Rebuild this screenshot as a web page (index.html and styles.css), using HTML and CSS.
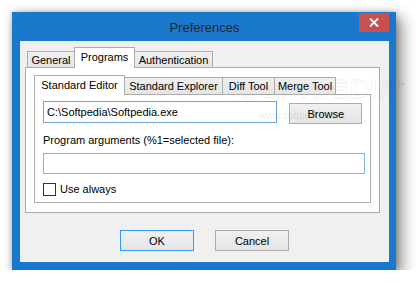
FILE: index.html
```html
<!DOCTYPE html>
<html lang="en">
<head>
    <meta charset="UTF-8">
    <title>Preferences</title>
    <link rel="stylesheet" href="styles.css">
</head>
<body>
    <div class="window">
        <div class="titlebar">
            <span class="title">Preferences</span>
            <div class="close">
                <svg width="10" height="9" viewBox="0 0 10 9">
                    <path d="M1 0.5 L9 8.5 M9 0.5 L1 8.5" stroke="#fff" stroke-width="1.8" fill="none"/>
                </svg>
            </div>
        </div>

        <div class="client">
            <div class="tabs outer-tabs">
                <div class="tab">General</div>
                <div class="tab active">Programs</div>
                <div class="tab">Authentication</div>
            </div>

            <div class="panel outer-panel">
                <div class="tabs inner-tabs">
                    <div class="tab active">Standard Editor</div>
                    <div class="tab">Standard Explorer</div>
                    <div class="tab">Diff Tool</div>
                    <div class="tab">Merge Tool</div>
                </div>

                <div class="panel inner-panel">
                    <div class="path-row">
                        <div class="field path">C:\Softpedia\Softpedia.exe</div>
                        <div class="btn browse">Browse</div>
                    </div>
                    <div class="label">Program arguments (%1=selected file):</div>
                    <div class="field args"></div>
                    <div class="check">
                        <span class="box"></span>
                        <span>Use always</span>
                    </div>
                </div>
            </div>

            <div class="actions">
                <div class="btn default">OK</div>
                <div class="btn">Cancel</div>
            </div>
        </div>

        <!-- watermark -->
        <div class="mark">SOFTPEDIA<sup>™</sup></div>
        <div class="mark-url">www.softpedia.com</div>
    </div>
</body>
</html>
```

FILE: styles.css
```css
body {
    margin: 0;
    background: #fff;
    font-family: 'Liberation Sans', Arial, sans-serif;
    font-size: 11px;
    color: #000;
}

.window {
    position: relative;
    margin: 12px 0 0 12px;
    width: 384px;
    height: 258px;
    box-sizing: border-box;
    padding: 0 7px 8px 8px;
    background: #1a79cc;
    display: flex;
    flex-direction: column;
    box-shadow: 0 0 6px rgba(0,0,0,0.25), 6px 6px 14px rgba(0,0,0,0.45);
}

.titlebar {
    position: relative;
    height: 29px;
    display: flex;
    align-items: center;
    justify-content: center;
}

.title {
    font-size: 13px;
    color: #1d2733;
    margin-top: 1px;
}

.close {
    position: absolute;
    top: 1px;
    right: 0;
    width: 30px;
    height: 19px;
    background: #c75050;
    display: flex;
    align-items: center;
    justify-content: center;
}

.close svg {
    display: block;
}

.client {
    flex: 1;
    background: #f0f0f0;
    padding: 6px 9px 0 5px;
    display: flex;
    flex-direction: column;
}

.tabs {
    display: flex;
    align-items: flex-end;
    position: relative;
    z-index: 1;
}

.tab {
    box-sizing: border-box;
    border: 1px solid #acacac;
    border-bottom: none;
    border-right: none;
    background: linear-gradient(#f0f0f0, #e5e5e5);
    display: flex;
    align-items: center;
    justify-content: center;
    white-space: nowrap;
}

.tab:last-child,
.tab.active {
    border-right: 1px solid #acacac;
}

.tab.active {
    background: #fff;
    margin-bottom: -1px;
}

.tab.active + .tab {
    border-left: none;
}

.outer-tabs {
    height: 20px;
    padding-left: 2px;
}

.outer-tabs .tab {
    height: 16px;
}

.outer-tabs .tab.active {
    height: 21px;
    padding-bottom: 2px;
}

.outer-tabs .tab:nth-child(1) { width: 47px; }
.outer-tabs .tab:nth-child(2) { width: 61px; }
.outer-tabs .tab:nth-child(3) { width: 78px; }

.inner-tabs {
    height: 19px;
}

.inner-tabs .tab {
    height: 17px;
}

.inner-tabs .tab.active {
    height: 20px;
    padding-bottom: 2px;
}

.inner-tabs .tab:nth-child(1) { width: 91px; }
.inner-tabs .tab:nth-child(2) { width: 97px; }
.inner-tabs .tab:nth-child(3) { width: 52px; }
.inner-tabs .tab:nth-child(4) { width: 62px; }

.panel {
    box-sizing: border-box;
    border: 1px solid #acacac;
    background: #fff;
}

.outer-panel {
    width: 355px;
    height: 146px;
    padding: 7px 8px 8px 8px;
    display: flex;
    flex-direction: column;
}

.inner-panel {
    width: 337px;
    height: 109px;
    padding: 6px 8px 0 8px;
}

.path-row {
    display: flex;
    align-items: flex-start;
    gap: 12px;
}

.field {
    box-sizing: border-box;
    border: 1px solid #7eb4ea;
    background: #fff;
    display: flex;
    align-items: center;
    padding-left: 3px;
}

.field.path {
    width: 236px;
    height: 22px;
    border-color: #6ea2dc;
}

.field.args {
    width: 322px;
    height: 21px;
    margin-top: 5px;
}

.label {
    margin-top: 9px;
    line-height: 15px;
}

.check {
    margin-top: 8px;
    display: flex;
    align-items: center;
    gap: 4px;
    line-height: 15px;
}

.box {
    width: 13px;
    height: 13px;
    box-sizing: border-box;
    border: 1px solid #333;
    background: #fff;
}

.btn {
    box-sizing: border-box;
    width: 74px;
    height: 21px;
    border: 1px solid #acacac;
    background: linear-gradient(#f0f0f0, #e5e5e5);
    display: flex;
    align-items: center;
    justify-content: center;
}

.btn.browse {
    width: 73px;
    margin-top: 2px;
}

.btn.default {
    border-color: #3399ff;
}

.actions {
    margin-top: 17px;
    display: flex;
    justify-content: center;
    gap: 21px;
    padding-left: 4px;
}

.mark {
    position: absolute;
    left: 228px;
    top: 62px;
    font-size: 26px;
    font-weight: bold;
    letter-spacing: 1px;
    color: transparent;
    -webkit-text-stroke: 1px rgba(0,0,0,0.07);
    pointer-events: none;
}

.mark sup {
    font-size: 8px;
    -webkit-text-stroke: 0;
    color: rgba(0,0,0,0.12);
}

.mark-url {
    position: absolute;
    left: 247px;
    top: 98px;
    font-size: 10px;
    color: rgba(0,0,0,0.1);
    pointer-events: none;
}
```
